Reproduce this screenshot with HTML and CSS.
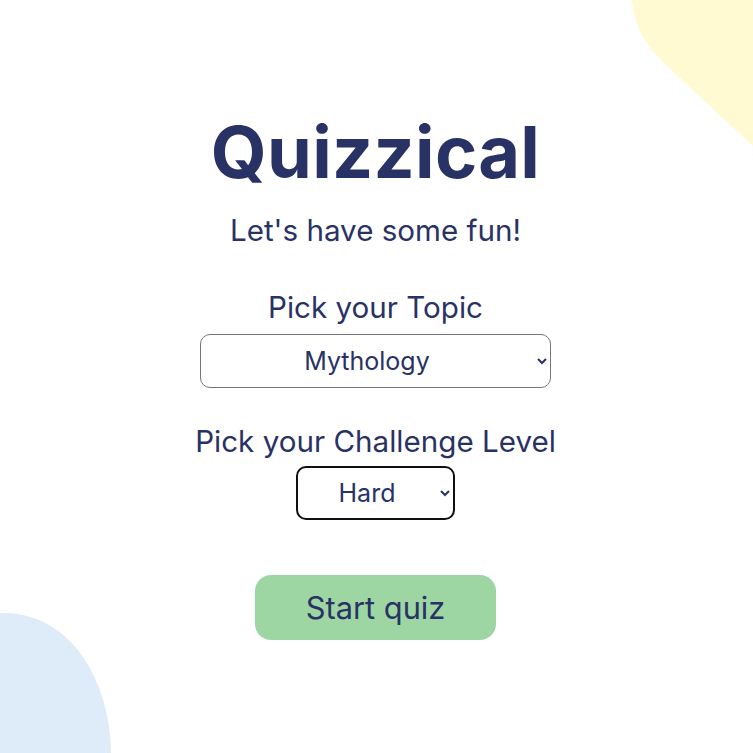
FILE: index.html
```html
<!DOCTYPE html>
<html lang="en">
<head>
<meta charset="utf-8">
<title>Quizzical</title>
<link rel="stylesheet" href="styles.css">
</head>
<body>
<svg class="blob blob-yellow" width="121" height="150" viewBox="632 0 121 150" aria-hidden="true">
  <path d="M632 0 C634 25 645 45 665 64 L753 146 L753 0 Z" fill="#FFFAD1"/>
</svg>
<svg class="blob blob-blue" width="112" height="140" viewBox="0 613 112 140" aria-hidden="true">
  <path d="M0 613 C70 611 110 680 111 753 L0 753 Z" fill="#DEEBF8"/>
</svg>
<main class="intro">
  <h1 class="title">Quizzical</h1>
  <p class="subtitle">Let's have some fun!</p>
  <label class="label label-topic" for="topic">Pick your Topic</label>
  <select id="topic" class="select select-topic">
    <option>Mythology</option>
  </select>
  <label class="label label-level" for="level">Pick your Challenge Level</label>
  <select id="level" class="select select-level">
    <option>Hard</option>
  </select>
  <button class="start">Start quiz</button>
</main>
</body>
</html>
```

FILE: styles.css
```css
html, body {
  margin: 0;
  padding: 0;
}
body {
  width: 753px;
  height: 753px;
  overflow: hidden;
  position: relative;
  background: #ffffff;
  font-family: Inter, "Noto Sans", sans-serif;
  color: #293264;
}
.blob {
  position: absolute;
  display: block;
}
.blob-yellow {
  top: 0;
  right: 0;
}
.blob-blue {
  left: 0;
  bottom: 0;
}
.intro {
  position: relative;
  display: flex;
  flex-direction: column;
  align-items: center;
  padding-top: 116px;
  padding-right: 2px;
}
.title {
  margin: 0;
  font-size: 72px;
  line-height: 72px;
  font-weight: 700;
  letter-spacing: 0.3px;
}
.subtitle {
  margin: 25px 0 0;
  font-size: 29.6px;
  line-height: 34px;
}
.label {
  font-size: 29.6px;
  line-height: 34px;
}
.label-topic {
  margin-top: 43px;
}
.label-level {
  margin-top: 36px;
}
.select {
  box-sizing: border-box;
  height: 54px;
  font-family: Inter, "Noto Sans", sans-serif;
  font-size: 25px;
  color: #293264;
  text-align: center;
  background: #ffffff;
  border-radius: 10px;
  padding: 0 13px 0 8px;
}
.select-topic {
  margin-top: 10px;
  width: 351px;
  border: 1px solid #767676;
}
.select-level {
  margin-top: 8px;
  width: 159px;
  border: 2px solid #101010;
}
.start {
  margin-top: 55px;
  width: 241px;
  height: 65px;
  border: none;
  border-radius: 16px;
  background: #9ED6A3;
  color: #293264;
  font-family: Inter, "Noto Sans", sans-serif;
  font-size: 30.8px;
  cursor: pointer;
}
```
